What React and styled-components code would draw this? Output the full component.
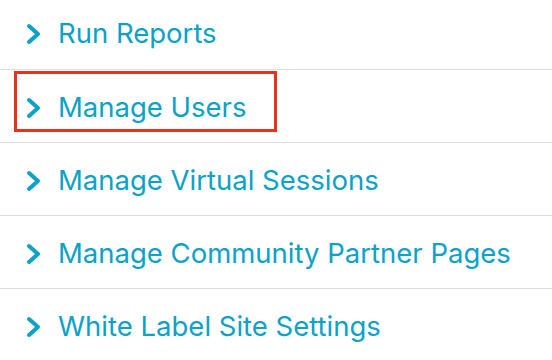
import React from 'react';
import styled, { createGlobalStyle } from 'styled-components';

const GlobalStyle = createGlobalStyle`
  html, body {
    margin: 0;
    padding: 0;
    background: #ffffff;
    font-family: Inter, "Noto Sans", "Liberation Sans", sans-serif;
  }
`;

const Menu = styled.ul`
  list-style: none;
  margin: -4px 0 0;
  padding: 0;
  width: 552px;
`;

const Item = styled.li`
  position: relative;
  display: flex;
  align-items: center;
  padding: 0 0 0 26px;
  border-top: ${(props) => (props.first ? 'none' : '1px solid #dedede')};
  height: ${(props) => (props.first ? '73px' : '72px')};
`;

const Link = styled.a`
  display: flex;
  align-items: center;
  gap: 16px;
  color: #0aa2c9;
  text-decoration: none;
  font-size: 27.5px;
  line-height: 1;
  padding-top: 3px;
`;

// red annotation box drawn over the selected entry
const Highlight = styled.div`
  position: absolute;
  left: 14px;
  top: 1px;
  width: 257px;
  height: 55px;
  border: 3px solid #e8321c;
  pointer-events: none;
`;

const Chevron = () => (
  <svg width="16" height="22" viewBox="0 0 16 22" fill="none">
    <path d="M3 3 L12 11 L3 19" stroke="#0aa2c9" strokeWidth="4" strokeLinecap="round" strokeLinejoin="round" />
  </svg>
);

const items = [
  'Run Reports',
  'Manage Users',
  'Manage Virtual Sessions',
  'Manage Community Partner Pages',
  'White Label Site Settings',
];

export default function App() {
  return (
    <>
      <GlobalStyle />
      <Menu>
        {items.map((label, i) => (
          <Item key={label} first={i === 0}>
            <Link href="#">
              <Chevron />
              {label}
            </Link>
            {label === 'Manage Users' && <Highlight />}
          </Item>
        ))}
      </Menu>
    </>
  );
}
